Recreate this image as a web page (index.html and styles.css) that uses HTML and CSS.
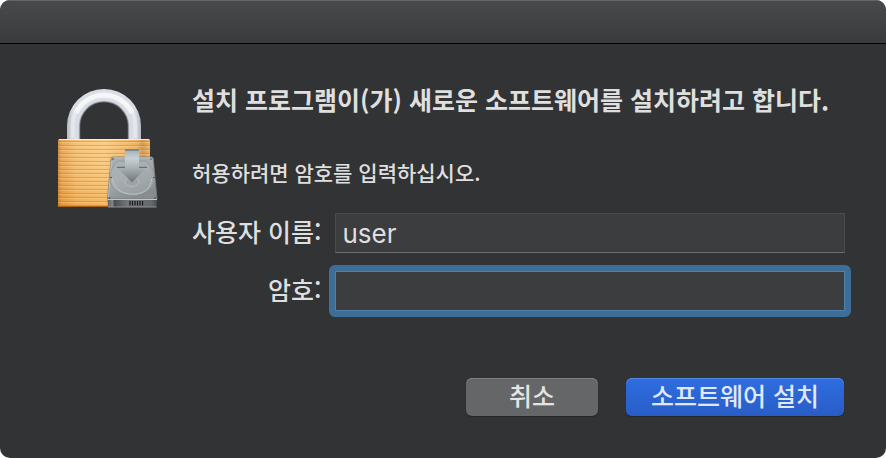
FILE: index.html
```html
<!DOCTYPE html>
<html lang="ko">
<head>
<meta charset="utf-8">
<meta name="viewport" content="width=device-width, initial-scale=1">
<title>설치 프로그램</title>
<link rel="stylesheet" href="styles.css">
</head>
<body>
<main class="dialog" role="dialog" aria-labelledby="dialog-title">
  <header class="titlebar"></header>
  <div class="content">
    <svg class="lock" viewBox="10 5 105 125" aria-hidden="true">
      <defs>
        <linearGradient id="steel" x1="22" x2="96" y1="0" y2="0" gradientUnits="userSpaceOnUse">
          <stop offset="0" stop-color="#b6bbc5"/><stop offset=".08" stop-color="#d9dce3"/>
          <stop offset=".5" stop-color="#dcdfe5"/><stop offset=".92" stop-color="#d9dce3"/>
          <stop offset="1" stop-color="#b3b9c5"/>
        </linearGradient>
        <linearGradient id="brass" x1="0" x2="1" y1="0" y2="0">
          <stop offset="0" stop-color="#c47722"/><stop offset=".04" stop-color="#e79b41"/>
          <stop offset=".2" stop-color="#f5ba66"/><stop offset=".5" stop-color="#fbc777"/>
          <stop offset=".85" stop-color="#eda951"/><stop offset=".92" stop-color="#c98a3c"/>
          <stop offset="1" stop-color="#edaa51"/>
        </linearGradient>
        <linearGradient id="shade" x1="0" x2="0" y1="0" y2="1">
          <stop offset="0" stop-color="#fff" stop-opacity=".12"/>
          <stop offset="1" stop-color="#e58a20" stop-opacity=".3"/>
        </linearGradient>
        <pattern id="ridges" width="4" height="4" y="61" patternUnits="userSpaceOnUse">
          <path d="M0 0.5H4" stroke="#c87520" stroke-opacity=".42"/>
          <path d="M0 1.5H4" stroke="#ffe0a0" stroke-opacity=".3"/>
        </pattern>
        <linearGradient id="disk" x1="0" x2=".5" y1="0" y2="1">
          <stop offset="0" stop-color="#a9b1b5"/><stop offset=".5" stop-color="#a4aaad"/>
          <stop offset="1" stop-color="#868c90"/>
        </linearGradient>
        <linearGradient id="edge" x1="0" x2="1" y1="0" y2="0">
          <stop offset="0" stop-color="#595c5f"/><stop offset=".1" stop-color="#85888b"/>
          <stop offset=".14" stop-color="#4b4e51"/><stop offset=".4" stop-color="#74777a"/>
          <stop offset=".88" stop-color="#66696c"/><stop offset="1" stop-color="#4d5053"/>
        </linearGradient>
        <linearGradient id="arrow" x1="0" x2="0" y1="0" y2="1">
          <stop offset="0" stop-color="#a2b2b9"/><stop offset=".25" stop-color="#c6d1d5"/>
          <stop offset=".55" stop-color="#aab1b4"/><stop offset="1" stop-color="#6e7376"/>
        </linearGradient>
      </defs>
      <path d="M22 60V46a37 37 0 0 1 74 0V60H83.500V46a24.500 24.500 0 0 0-49 0V60Z" fill="url(#steel)"/>
      <path d="M34.500 59V46a24.500 24.500 0 0 1 49 0V59" fill="none" stroke="#9ba1ad" stroke-width="1.500" stroke-opacity=".6"/>
      <path d="M27.500 58V46a31.500 31.500 0 0 1 63 0V58" fill="none" stroke="#eef0f3" stroke-width="4" stroke-opacity=".6"/>
      <path d="M31 33a31 31 0 0 1 56 0" fill="none" stroke="#fff" stroke-width="5" stroke-opacity=".65"/>
      <rect x="13" y="59" width="92" height="68" rx="1.500" fill="url(#brass)"/>
      <rect x="13" y="59" width="92" height="68" rx="1.500" fill="url(#shade)"/>
      <rect x="13" y="61" width="92" height="65" fill="url(#ridges)"/>
      <path d="M14 59.500H104" stroke="#ffeeb9"/>
      <path d="M14 126.500H63" stroke="#ac6015"/>
      <path d="M67.500 77H106.500Q108 77 108.300 79L112 119H62.500L66 79Q66.200 77 67.500 77Z" fill="url(#disk)" stroke="#777e82" stroke-width=".8"/>
      <path d="M68 77.800H106.500M66.500 81L63.500 117" fill="none" stroke="#dbe0e2" stroke-width=".7" stroke-opacity=".7"/>
      <path d="M73 81H101C109 88 113 101 105 109C97 117 77 117 69 109C62 101 65 87 73 81Z" fill="#b1b6b8" fill-opacity=".4" stroke="#8b9296" stroke-width=".7"/>
      <path d="M67.500 99C69 111 81 115.500 92 114C101 112.500 106 107 106.500 99" fill="none" stroke="#c9ced0" stroke-width=".8"/>
      <ellipse cx="87" cy="102" rx="7" ry="4.500" fill="#9da3a6" stroke="#bdc2c4" stroke-width=".8"/>
      <path d="M62.500 119H112L111.500 127H63Z" fill="url(#edge)"/>
      <path d="M62.500 119.500H112" stroke="#c4c4c2"/>
      <path d="M63 127H111.500" stroke="#8f9193"/>
      <path d="M84 121h14v4.500h-14z" fill="#77797a"/>
      <path d="M85 121V125.500M87.500 121V125.500M90 121V125.500M92.500 121V125.500M95 121V125.500M97.500 121V125.500" stroke="#17191b" stroke-width="1.300"/>
      <g fill="#3f4447"><circle cx="68" cy="79" r=".8"/><circle cx="106" cy="79" r=".8"/><circle cx="66" cy="97.500" r=".8"/><circle cx="109" cy="97.500" r=".8"/><circle cx="64.500" cy="118" r=".8"/><circle cx="110" cy="118" r=".8"/></g>
      <path d="M80 70H94V87H102L87 102.500L72 87H80Z" fill="url(#arrow)"/>
      <path d="M80 70H94M72 87.300H80M94 87.300H102" stroke="#596065"/>
    </svg>
    <form class="form">
      <h1 class="title" id="dialog-title">설치 프로그램이(가) 새로운 소프트웨어를 설치하려고 합니다.</h1>
      <p class="hint">허용하려면 암호를 입력하십시오.</p>
      <div class="fields">
        <label for="username">사용자 이름:</label>
        <input class="field" id="username" type="text" value="user" autocomplete="off">
        <label for="password">암호:</label>
        <input class="field field-active" id="password" type="password" autocomplete="off">
      </div>
      <div class="actions">
        <button class="button" type="button">취소</button>
        <button class="button button-primary" type="submit">소프트웨어 설치</button>
      </div>
    </form>
  </div>
</main>
</body>
</html>
```
FILE: styles.css
```css
* {
  box-sizing: border-box;
}

body {
  margin: 0;
  background: #fff;
  color: #dfdfdf;
  font-family: "Noto Sans CJK KR", sans-serif;
  font-size: 25px;
  font-weight: 500;
  line-height: 32px;
}

.dialog {
  min-height: 100vh;
  border-radius: 10px;
  background: #323335;
  overflow: hidden;
}

.titlebar {
  height: 44px;
  border-top: 1px solid #646567;
  border-bottom: 1px solid #000;
  background: linear-gradient(#48494b, #3a3b3d);
}

.content {
  display: flex;
  align-items: flex-start;
  gap: 32px;
  padding: 39px 41px 40px 55px;
}

.lock {
  flex: none;
  width: 105px;
  height: 125px;
  margin-top: 2px;
}

.form {
  flex: 1;
  min-width: 0;
}

.title {
  margin: 0 0 41px;
  font-size: 25px;
  font-weight: 700;
  line-height: 32px;
  white-space: nowrap;
}

.hint {
  margin: 0 0 25px;
  font-size: 21px;
  line-height: 32px;
}

.fields {
  display: grid;
  grid-template-columns: max-content 1fr;
  align-items: center;
  gap: 18px 14px;
}

.fields label {
  padding-bottom: 4px;
  text-align: right;
}

.field {
  width: 100%;
  height: 40px;
  padding: 0 6px;
  border: 1px solid #4a4b4c;
  border-bottom-color: #6b6c6d;
  border-radius: 0;
  outline: none;
  background: #3c3d3f;
  color: #dfdfdf;
  font: 400 26px/36px Inter, "Noto Sans CJK KR", sans-serif;
}

/* The focus ring is drawn outside the field's own box. */
.field-active {
  width: calc(100% + 12px);
  height: 52px;
  margin: -6px;
  border: 6px solid #3e6e98;
  border-radius: 6px;
  box-shadow: inset 0 0 0 1px #4d82ae;
}

.actions {
  display: flex;
  justify-content: flex-end;
  gap: 28px;
  margin: 67px 1px 0 0;
}

.button {
  min-width: 132px;
  height: 38px;
  padding: 0 25px 4px;
  border: 0;
  border-radius: 6px;
  background: #656668;
  box-shadow: inset 0 1px #7e7f80, 0 1px 1px #242527;
  color: #e4e4e4;
  font: 500 25px/34px "Noto Sans CJK KR", sans-serif;
}

.button-primary {
  background: linear-gradient(#2f6de0, #285dc6);
  box-shadow: inset 0 1px #538ae8, 0 1px 1px #242527;
  color: #e0e9fa;
}
```
